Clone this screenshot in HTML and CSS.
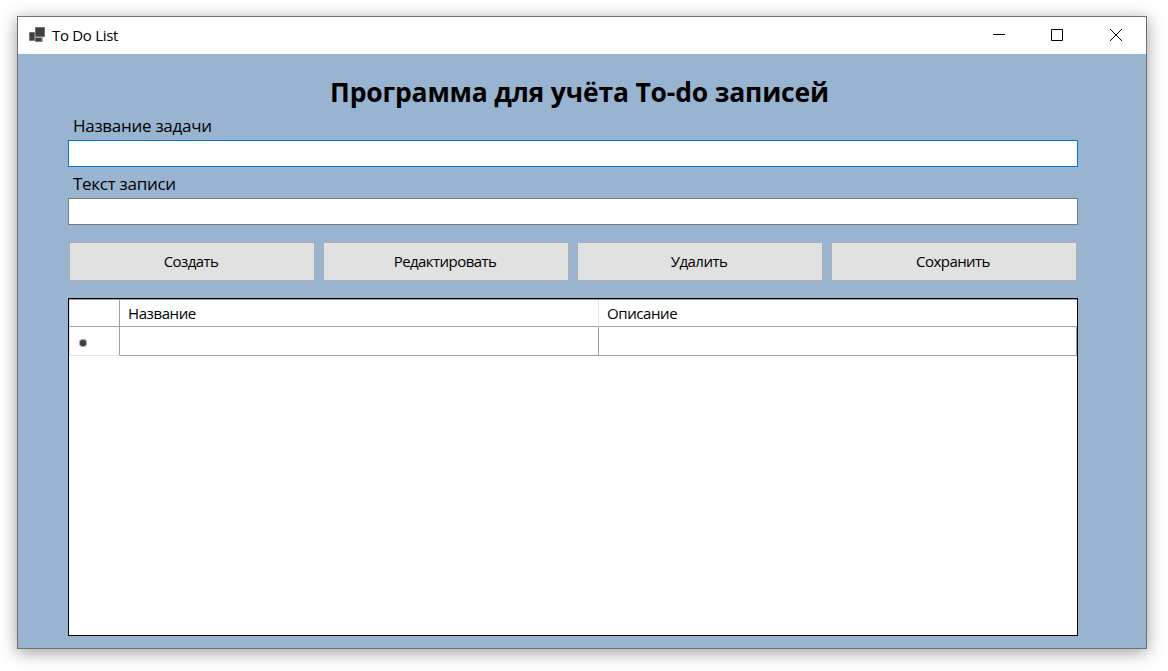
FILE: index.html
```html
<!DOCTYPE html>
<html lang="ru">
<head>
<meta charset="utf-8">
<title>To Do List</title>
<link rel="stylesheet" href="styles.css">
</head>
<body>
<main class="window">
  <header class="titlebar">
    <svg class="app-icon" width="18" height="16" viewBox="0 0 18 16">
      <path class="icon-edge" d="M1 5h6v9H1zM7 0h10v10H7zM7 10h8v5H7z"/>
      <path class="icon-fill" d="M1.500 5.500h5v8h-5zM7.500.5h9v9h-9zM7.500 11h6v3.500h-6z"/>
    </svg>
    <span class="caption">To Do List</span>
    <div class="controls">
      <svg width="13" height="13" viewBox="0 0 13 13"><path d="M1 5.500h12"/></svg>
      <svg width="13" height="13" viewBox="0 0 13 13"><path d="M.5.5h11v11H.5z"/></svg>
      <svg width="13" height="13" viewBox="0 0 13 13"><path d="M0 0l12 12M12 0L0 12"/></svg>
    </div>
  </header>
  <section class="form">
    <h1 class="heading">Программа для учёта To-do записей</h1>
    <label class="label label-name" for="name">Название задачи</label>
    <input class="field field-active" id="name" type="text">
    <label class="label label-text" for="text">Текст записи</label>
    <input class="field" id="text" type="text">
    <div class="actions">
      <button class="button" type="button">Создать</button>
      <button class="button" type="button">Редактировать</button>
      <button class="button" type="button">Удалить</button>
      <button class="button" type="button">Сохранить</button>
    </div>
    <div class="grid">
      <div class="grid-head">
        <div class="corner"></div>
        <div class="col">Название</div>
        <div class="col col-last">Описание</div>
      </div>
      <div class="grid-row">
        <div class="row-mark">
          <svg width="8" height="8" viewBox="0 0 8 8"><path class="icon-edge" d="M2 0h4l2 2v4L6 8H2L0 6V2z"/><path class="icon-fill" d="M2.500 1h3L7 2.500v3L5.500 7h-3L1 5.500v-3z"/></svg>
        </div>
        <div class="cell"></div>
        <div class="cell"></div>
      </div>
    </div>
  </section>
</main>
</body>
</html>
```
FILE: styles.css
```css
* { box-sizing: border-box; }
body {
  margin: 0;
  height: 671px;
  padding: 16px 0 0 17px;
  overflow: hidden;
  background: #fff;
  color: #000;
  font-family: "Open Sans", "Noto Sans", sans-serif;
}
.window {
  width: 1130px;
  height: 633px;
  border: 1px solid #707070;
  background: #99b4d1;
  box-shadow: 0 3px 16px rgba(0, 0, 0, .4);
}
.titlebar {
  display: flex;
  align-items: center;
  height: 37px;
  padding: 0 23px 0 10px;
  background: #fff;
}
.app-icon { margin-top: -2px; }
.icon-edge { fill: #aaa; }
.icon-fill { fill: #404040; }
.caption {
  margin: -2px 0 0 6px;
  font-size: 15px;
  letter-spacing: -.3px;
}
.controls {
  display: flex;
  gap: 46px;
  margin: -1px 0 0 auto;
}
.controls path { fill: none; stroke: #000; stroke-width: 1; }
.form {
  display: flex;
  flex-direction: column;
  width: 1060px;
  padding: 20px 0 0 50px;
}
.heading {
  margin: 0;
  padding-left: 13px;
  height: 36px;
  font-size: 26.500px;
  line-height: 36px;
  font-weight: 700;
  letter-spacing: -.18px;
  text-align: center;
  white-space: nowrap;
}
.label {
  padding-left: 5px;
  font-size: 17px;
  letter-spacing: -.28px;
}
.label-name { height: 30px; line-height: 32px; }
.label-text { height: 31px; line-height: 34px; }
.field {
  width: 1010px;
  height: 27px;
  padding: 0 4px;
  border: 1px solid #7a7a7a;
  outline: 0;
  background: #fff;
  font: inherit;
}
.field-active { border-color: #0078d7; }
.actions {
  display: grid;
  grid-template-columns: repeat(4, 246px);
  gap: 8px;
  margin: 17px 0 17px 1px;
}
.button {
  height: 39px;
  padding: 0 2px 2px 0;
  border: 1px solid #adadad;
  border-radius: 0;
  background: #e1e1e1;
  color: #000;
  font: 15px "Open Sans", "Noto Sans", sans-serif;
  letter-spacing: -.55px;
}
.grid {
  width: 1010px;
  height: 338px;
  border: 1px solid #000;
  background: #fff;
}
.grid-head, .grid-row {
  display: grid;
  grid-template-columns: 51px 479px 478px;
}
.grid-head {
  height: 28px;
  border-top: 1px solid #a0a0a0;
  border-bottom: 1px solid #a0a0a0;
  font-size: 15px;
  line-height: 27px;
  letter-spacing: -.4px;
}
.corner { border-left: 1px solid #ddd; border-right: 1px solid #a0a0a0; }
.col { padding-left: 8px; border-right: 1px solid #e5e5e5; }
.col-last { border-right: 0; }
.grid-row { height: 29px; }
.row-mark {
  display: flex;
  align-items: center;
  padding: 4px 0 0 9px;
  border: solid #e5e5e5;
  border-width: 0 0 1px 1px;
  border-right: 1px solid #a0a0a0;
}
.cell { border-right: 1px solid #a0a0a0; border-bottom: 1px solid #a0a0a0; }
```
